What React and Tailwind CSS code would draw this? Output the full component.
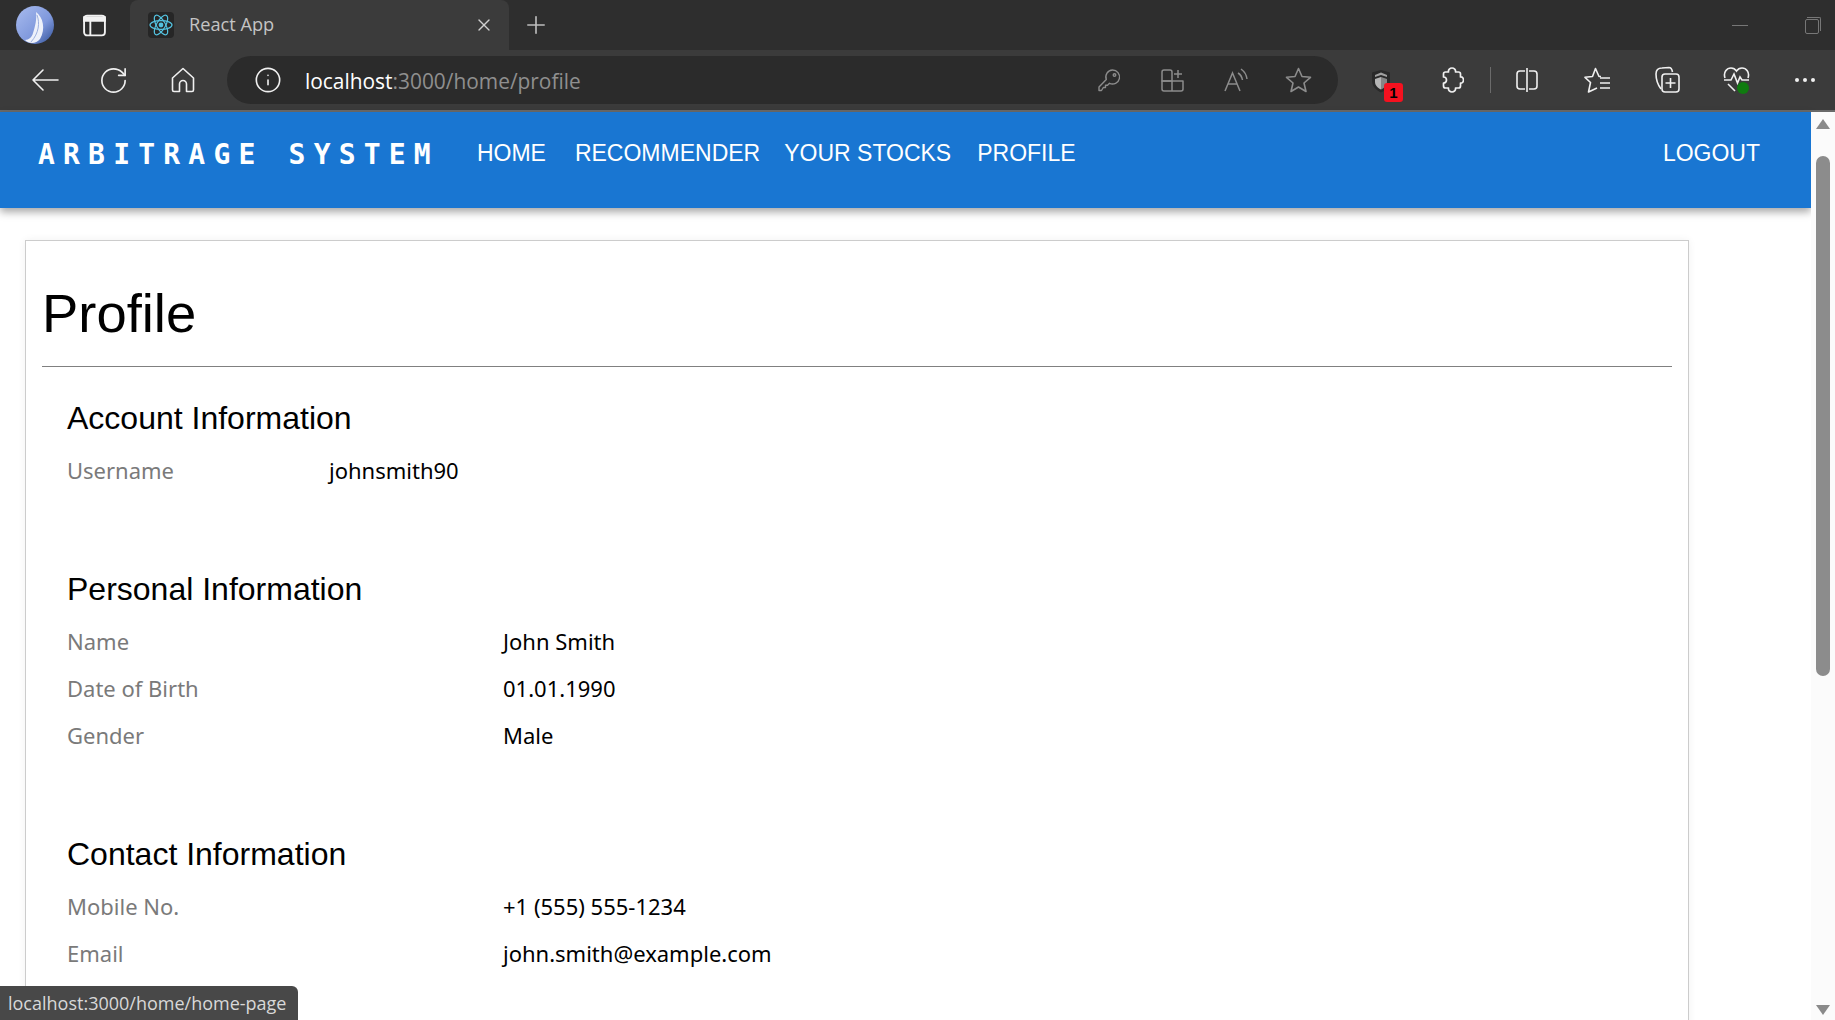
import { X, Plus, RotateCw, Info } from 'lucide-react'

const UI_FONT = "font-['Open_Sans',sans-serif]"

const navLinks = [
  { label: 'HOME', cls: 'ml-[38px]' },
  { label: 'RECOMMENDER', cls: 'ml-[29px]' },
  { label: 'YOUR STOCKS', cls: 'ml-[24px]' },
  { label: 'PROFILE', cls: 'ml-[26px]' },
]

function ReactIcon() {
  return (
    <svg width="26" height="26" viewBox="0 0 26 26" className="bg-[#262626] rounded-sm">
      <circle cx="13" cy="13" r="2.4" fill="#53c1de" />
      <g fill="none" stroke="#53c1de" strokeWidth="1.2">
        <ellipse cx="13" cy="13" rx="11" ry="4.4" />
        <ellipse cx="13" cy="13" rx="11" ry="4.4" transform="rotate(60 13 13)" />
        <ellipse cx="13" cy="13" rx="11" ry="4.4" transform="rotate(120 13 13)" />
      </g>
    </svg>
  )
}

function Avatar() {
  return (
    <svg width="40" height="40" viewBox="0 0 40 40">
      <defs>
        <linearGradient id="av" x1="0" y1="0" x2="1" y2="1">
          <stop offset="0" stopColor="#a9bcef" />
          <stop offset="0.6" stopColor="#7f98dc" />
          <stop offset="1" stopColor="#2f4f96" />
        </linearGradient>
      </defs>
      <ellipse cx="20" cy="20" rx="19" ry="19" fill="url(#av)" />
      <path d="M21 7 C28 12 31 24 25 34 C21 39 14 39 10 35 C14 35 17 32 18 28 C20 22 22 14 21 7Z" fill="#eef1fa" />
      <path d="M22 10 C25 18 24 28 16 37" fill="none" stroke="#9db0df" strokeWidth="1" />
    </svg>
  )
}

function TabsIcon() {
  return (
    <svg width="25" height="25" viewBox="0 0 24 24" fill="none" stroke="#f2f2f2" strokeWidth="1.8">
      <rect x="2" y="2.500" width="20" height="19" rx="3" />
      <path d="M2 4 h20 v3.500 h-20z M8 8 v13" fill="#f2f2f2" />
    </svg>
  )
}

function BackIcon() {
  return (
    <svg width="28" height="24" viewBox="0 0 28 24" fill="none" stroke="#f0f0f0" strokeWidth="1.6" strokeLinecap="round" strokeLinejoin="round">
      <path d="M2 12 H27 M12 2 L2 12 L12 22" />
    </svg>
  )
}

function HomeIcon() {
  return (
    <svg width="24" height="26" viewBox="0 0 24 26" fill="none" stroke="#f0f0f0" strokeWidth="1.6" strokeLinejoin="round">
      <path d="M1.500 11 L12 1.500 L22.500 11 V23 a1.500 1.500 0 0 1 -1.500 1.500 H15.500 V17 a3.500 3.500 0 0 0 -7 0 V24.500 H3 a1.500 1.500 0 0 1 -1.500 -1.500Z" />
    </svg>
  )
}

function KeyIcon() {
  return (
    <svg width="23" height="23" viewBox="0 0 23 23" fill="none" stroke="#8c8c8c" strokeWidth="1.4" strokeLinejoin="round">
      <path d="M14.500 1 a7 7 0 1 1 -3 13.300 L9.500 16.300 H7.500 V18.500 H5.300 L3.500 21.500 H1 V18 L8.300 10.500 A7 7 0 0 1 14.500 1Z" />
      <circle cx="16.500" cy="6" r="1.300" />
    </svg>
  )
}

function AppsIcon() {
  return (
    <svg width="23" height="23" viewBox="0 0 23 23" fill="none" stroke="#8c8c8c" strokeWidth="1.5" strokeLinejoin="round">
      <path d="M1 12 V3 a2 2 0 0 1 2 -2 H9 a2 2 0 0 1 2 2 V12Z" />
      <path d="M1 12 H22 V20 a2 2 0 0 1 -2 2 H3 a2 2 0 0 1 -2 -2Z M11 12 V22" />
      <path d="M17 1 V9 M13 5 H21" />
    </svg>
  )
}

function ReadIcon() {
  return (
    <svg width="26" height="26" viewBox="0 0 26 26" fill="none" stroke="#8c8c8c" strokeWidth="1.5">
      <path d="M2 24 L9.500 6 L17 24 M5 17 H14" />
      <path d="M15 6 c2.500 1.500 4 4 4.500 7 M18 2 c3.500 2.500 5.500 6 6 10" />
    </svg>
  )
}

function StarIcon() {
  return (
    <svg width="27" height="26" viewBox="0 0 27 26" fill="none" stroke="#8c8c8c" strokeWidth="1.6" strokeLinejoin="round">
      <path d="M13.500 1.500 L17 9.500 L25.500 10.300 L19 16 L21 24.500 L13.500 20 L6 24.500 L8 16 L1.500 10.300 L10 9.500Z" />
    </svg>
  )
}

function ShieldIcon() {
  return (
    <div className="relative w-[20px] h-[22px]">
      <svg width="20" height="24" viewBox="0 0 20 24">
        <path d="M10 1 L19 3.500 V12 C19 18 14 21.500 10 23.500 C6 21.500 1 18 1 12 V3.500Z" fill="#2a2a2a" />
        <path d="M10 8 L16 10 V13 C16 16.500 13 19 10 20.500Z" fill="#858585" />
        <path d="M10 8 L4 10 V13 C4 16.500 7 19 10 20.500Z" fill="#b5b5b5" />
        <path d="M4 6 L10 3.500 L16 6 V8 L10 6 L4 8Z" fill="#a0a0a0" />
      </svg>
      <span className="absolute left-[13px] top-[14px] w-[19px] h-[19px] rounded-[3px] bg-[#f5111f] text-black text-[15px] font-bold leading-[19px] text-center font-['Liberation_Sans',sans-serif]">
        1
      </span>
    </div>
  )
}

function PuzzleIcon() {
  return (
    <svg width="24" height="26" viewBox="0 0 24 26" fill="none" stroke="#f0f0f0" strokeWidth="1.7" strokeLinejoin="round">
      <path d="M8.500 5 C8 2.500 10 1 12 1 C14 1 16 2.500 15.500 5 H18.500 a2 2 0 0 1 2 2 V10 C22.500 9.500 23.500 11.500 23.500 13 C23.500 14.500 22.500 16.500 20.500 16 V19 a2 2 0 0 1 -2 2 H15.500 C16 23.500 14 25 12 25 C10 25 8 23.500 8.500 21 H5.500 a2 2 0 0 1 -2 -2 V16 C5.500 16 6.500 14.500 6.500 13 C6.500 11.500 5.500 10 3.500 10 V7 a2 2 0 0 1 2 -2Z" />
    </svg>
  )
}

function SplitIcon() {
  return (
    <svg width="24" height="26" viewBox="0 0 24 26" fill="none" stroke="#f0f0f0" strokeWidth="1.6">
      <path d="M10 4 H5 a3 3 0 0 0 -3 3 v12 a3 3 0 0 0 3 3 h5 M14 4 h5 a3 3 0 0 1 3 3 v12 a3 3 0 0 1 -3 3 h-5 M12 1 v24" />
    </svg>
  )
}

function FavListIcon() {
  return (
    <svg width="27" height="27" viewBox="0 0 27 27" fill="none" stroke="#f0f0f0" strokeWidth="1.6" strokeLinejoin="round">
      <path d="M17 9.500 H15 L11.500 1.500 L8.500 9.500 L1 10.300 L6.500 15.500 L4.500 25 L13 21" />
      <path d="M16 11 H26 M16 16 H26 M16 21 H26" />
    </svg>
  )
}

function CollectionsIcon() {
  return (
    <svg width="26" height="28" viewBox="0 0 26 28" fill="none" stroke="#f0f0f0" strokeWidth="1.6">
      <path d="M7 23 C4 19 2 14 2 8 C2 4 4 2 8 2 L15 1.500 C17 1.500 18 3 18.500 6" />
      <rect x="8" y="8" width="17" height="18" rx="3" />
      <path d="M16.500 12 v10 M11.500 17 h10" />
    </svg>
  )
}

function HeartIcon() {
  return (
    <div className="relative w-[27px] h-[28px]">
      <svg width="27" height="26" viewBox="0 0 27 26" fill="none" stroke="#f0f0f0" strokeWidth="1.6">
        <path d="M2 12 C0 6 4 2 8 2 C10.500 2 12.500 3.500 13.500 5 C14.500 3.500 16.500 2 19 2 C23 2 27 6 25 12" />
        <path d="M1 14 H8 L11 8 L14.500 17 L17 11 L19 14 H26" />
        <path d="M5 18 L12 25" />
      </svg>
      <span className="absolute right-[1px] bottom-0 w-[12px] h-[12px] rounded-full bg-[#0f7b0f]" />
    </div>
  )
}

function DotsIcon() {
  return (
    <svg width="22" height="6" viewBox="0 0 22 6" fill="#f0f0f0">
      <circle cx="3" cy="3" r="2" />
      <circle cx="11" cy="3" r="2" />
      <circle cx="19" cy="3" r="2" />
    </svg>
  )
}

function ToolBtn({ className = '', children }) {
  return <div className={`flex items-center justify-center h-full shrink-0 ${className}`}>{children}</div>
}

function BrowserChrome() {
  return (
    <div className="shrink-0">
      <div className="flex h-[50px] bg-[#2e2e2e]">
        <div className="w-[70px] flex items-center justify-center"><Avatar /></div>
        <div className="w-[50px] flex items-center justify-start pl-[12px]"><TabsIcon /></div>
        <div className="ml-[10px] w-[379px] h-full bg-[#3b3b3b] rounded-t-[8px] flex items-center pl-[18px] pr-[15px]">
          <ReactIcon />
          <span className={`ml-[15px] text-[18.2px] text-[#c4c4c4] ${UI_FONT}`}>React App</span>
          <X className="ml-auto" size={20} color="#d0d0d0" strokeWidth={1.6} />
        </div>
        <div className="ml-[13px] flex items-center"><Plus size={28} color="#bdbdbd" strokeWidth={1.4} /></div>
        <div className="ml-auto flex items-center">
          <div className="w-[16px] h-px bg-[#777] mr-[57px]" />
          <div className="relative w-[14px] h-[15px] border border-[#777] rounded-[2px] mr-[16px] mt-[2px]">
            <div className="absolute -top-[3px] left-[1px] w-[14px] h-[14px] border-t border-r border-[#777] rounded-tr-[2px]" />
          </div>
        </div>
      </div>
      <div className="flex items-center h-[60px] bg-[#3b3b3b] pl-[10px]">
        <ToolBtn className="w-[69px]"><BackIcon /></ToolBtn>
        <ToolBtn className="w-[69px]"><RotateCw size={31} color="#f0f0f0" strokeWidth={1.3} /></ToolBtn>
        <ToolBtn className="w-[69px]"><HomeIcon /></ToolBtn>
        <div className="ml-[10px] w-[1111px] shrink-0 h-[48px] rounded-full bg-[#2b2b2b] flex items-center pl-[27px] pr-[8px]">
          <Info size={28} color="#f0f0f0" strokeWidth={1.4} />
          <span className={`ml-[23px] mt-[3px] text-[20.9px] ${UI_FONT}`}>
            <span className="text-white">localhost</span>
            <span className="text-[#8f8f8f]">:3000/home/profile</span>
          </span>
          <div className="ml-auto flex h-full">
            <ToolBtn className="w-[63px]"><KeyIcon /></ToolBtn>
            <ToolBtn className="w-[63px]"><AppsIcon /></ToolBtn>
            <ToolBtn className="w-[63px]"><ReadIcon /></ToolBtn>
            <ToolBtn className="w-[63px]"><StarIcon /></ToolBtn>
          </div>
        </div>
        <div className="ml-[8px] flex h-full items-center">
          <ToolBtn className="w-[70px]"><ShieldIcon /></ToolBtn>
          <ToolBtn className="w-[72px]"><PuzzleIcon /></ToolBtn>
          <div className="ml-[2px] w-px h-[26px] bg-[#6b6b6b]" />
          <ToolBtn className="w-[72px]"><SplitIcon /></ToolBtn>
          <ToolBtn className="w-[68px]"><FavListIcon /></ToolBtn>
          <ToolBtn className="w-[72px]"><CollectionsIcon /></ToolBtn>
          <ToolBtn className="w-[66px]"><HeartIcon /></ToolBtn>
          <ToolBtn className="w-[66px] pl-[6px]"><DotsIcon /></ToolBtn>
        </div>
      </div>
      <div className="h-[2px] bg-[#6a6a6a]" />
    </div>
  )
}

function NavBar() {
  return (
    <header className="relative z-10 h-[96px] bg-[#1976d2] shadow-[0_4px_8px_rgba(0,0,0,0.35)] flex items-start pl-[38px] pr-[51px] pt-[25px] text-white font-['Liberation_Sans',sans-serif]">
      <span className="mt-[1px] text-[28px] leading-[34px] font-bold tracking-[8.2px] font-['DejaVu_Sans_Mono',monospace] whitespace-pre">ARBITRAGE SYSTEM</span>
      {navLinks.map((l) => (
        <a key={l.label} className={`text-[23px] leading-[32px] ${l.cls}`}>{l.label}</a>
      ))}
      <a className="ml-auto text-[23px] leading-[32px]">LOGOUT</a>
    </header>
  )
}

function InfoRow({ label, value, labelWidth = 'w-[436px]' }) {
  return (
    <div className="flex h-[47px] items-center text-[22px] font-['Noto_Sans',sans-serif]">
      <span className={`${labelWidth} text-[#7a7a7a]`}>{label}</span>
      <span className="text-black">{value}</span>
    </div>
  )
}

function Section({ title, className = '', children }) {
  return (
    <section className={className}>
      <h2 className="text-[32px] leading-[40px] text-black font-['Liberation_Sans',sans-serif]">{title}</h2>
      <div className="mt-[9px]">{children}</div>
    </section>
  )
}

function Scrollbar() {
  return (
    <div className="w-[24px] shrink-0 bg-[#fbfbfb] flex flex-col items-center relative z-20">
      <div className="mt-[7px] w-0 h-0 border-x-[7px] border-x-transparent border-b-[10px] border-b-[#8a8a8a]" />
      <div className="mt-[27px] w-[14px] h-[520px] rounded-full bg-[#8c8c8c]" />
      <div className="mt-auto mb-[5px] w-0 h-0 border-x-[7px] border-x-transparent border-t-[10px] border-t-[#8a8a8a]" />
    </div>
  )
}

export default function App() {
  return (
    <div className="relative h-[1020px] w-full overflow-hidden flex flex-col bg-white">
      <BrowserChrome />
      <div className="flex flex-1 min-h-0">
        <main className="flex-1 min-w-0">
          <NavBar />
          <div className="ml-[25px] mt-[32px] w-[1664px] h-[1000px] border border-[#cccccc] shadow-[0_0_8px_rgba(0,0,0,0.06)] px-[16px] pt-[37px]">
            <h1 className="text-[54.4px] leading-[72px] text-black font-['Liberation_Sans',sans-serif]">Profile</h1>
            <hr className="mt-[16px] border-t border-[#808080]" />
            <div className="pl-[25px] pt-[31px]">
              <Section title="Account Information">
                <InfoRow label="Username" value="johnsmith90" labelWidth="w-[262px]" />
              </Section>
              <Section title="Personal Information" className="mt-[75px]">
                <InfoRow label="Name" value="John Smith" />
                <InfoRow label="Date of Birth" value="01.01.1990" />
                <InfoRow label="Gender" value="Male" />
              </Section>
              <Section title="Contact Information" className="mt-[75px]">
                <InfoRow label="Mobile No." value="+1 (555) 555-1234" />
                <InfoRow label="Email" value="john.smith@example.com" />
              </Section>
            </div>
          </div>
        </main>
        <Scrollbar />
      </div>
      <div className={`absolute left-0 bottom-0 w-[298px] h-[34px] z-30 bg-[#484848] rounded-tr-[6px] pl-[8px] text-[18px] leading-[34px] text-[#d8d8d8] ${UI_FONT}`}>
        localhost:3000/home/home-page
      </div>
    </div>
  )
}
